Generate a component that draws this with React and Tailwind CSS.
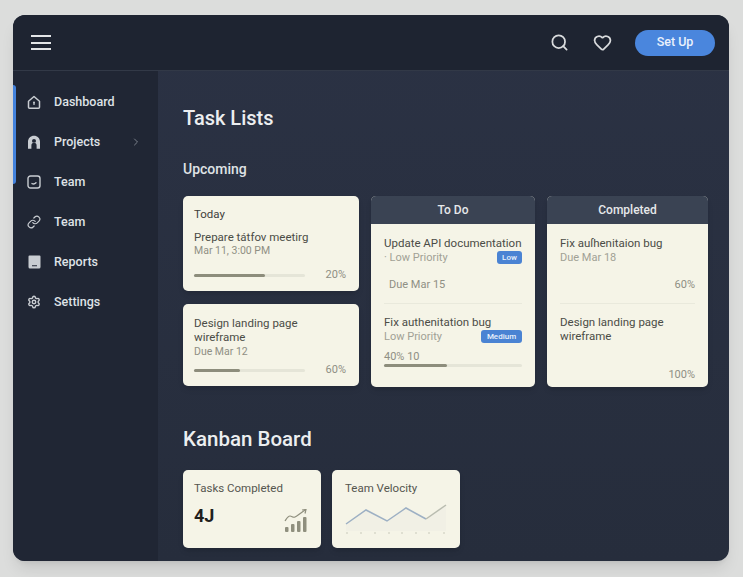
import { ChevronRight, Heart, Link, Search, Settings } from 'lucide-react';

function HomeIcon() {
    return (
        <svg width="14" height="15" viewBox="0 0 14 15" fill="none" stroke="currentColor" strokeWidth="1.5">
            <path d="M1.5 6.2 7 1.5l5.5 4.7v6.1a1 1 0 0 1-1 1h-9a1 1 0 0 1-1-1z" strokeLinejoin="round" />
            <circle cx="7" cy="7.6" r="1" fill="currentColor" stroke="none" />
            <rect x="6.4" y="7.6" width="1.2" height="2.4" fill="currentColor" stroke="none" />
        </svg>
    );
}

function ProjectsIcon() {
    return (
        <svg width="14" height="15" viewBox="0 0 14 15" fill="currentColor">
            <path fillRule="evenodd" d="M7 .8c3.4 0 6 2.6 6 6v7H9.6v-3.4a2.6 2.6 0 0 0-5.2 0v3.4H1v-7c0-3.4 2.6-6 6-6zm0 3.3a2 2 0 1 0 0 4 2 2 0 0 0 0-4z" />
        </svg>
    );
}

function FaceIcon() {
    return (
        <svg width="14" height="14" viewBox="0 0 14 14" fill="none" stroke="currentColor" strokeWidth="1.4">
            <rect x="1" y="1" width="12" height="12" rx="2.5" />
            <path d="M5 8.6c1.4.6 2.8.4 4-.8" strokeLinecap="round" />
        </svg>
    );
}

function ReportsIcon() {
    return (
        <svg width="13" height="14" viewBox="0 0 13 14" fill="currentColor">
            <path fillRule="evenodd" d="M1.5.5h10a1 1 0 0 1 1 1v10.5a1.5 1.5 0 0 1-1.5 1.5H2A1.5 1.5 0 0 1 .5 12V1.5a1 1 0 0 1 1-1zM4 10.2v1h5v-1z" />
        </svg>
    );
}

function TrendIcon() {
    return (
        <svg width="25" height="24" viewBox="0 0 25 24" fill="none" className="text-[#8f8f7e]">
            <path d="M1 12c2-3 3-5 5-5s3 2 5 1 6-4 10-7" stroke="currentColor" strokeWidth="1.2" />
            <path d="m18 1 4-.5-1 4" stroke="currentColor" strokeWidth="1.2" />
            <rect x="1" y="18" width="3.5" height="5" rx="1" fill="currentColor" />
            <rect x="7" y="15" width="3.5" height="8" rx="1" fill="currentColor" />
            <rect x="13" y="12" width="3.5" height="11" rx="1" fill="currentColor" />
            <rect x="19" y="8" width="3.5" height="15" rx="1" fill="currentColor" />
        </svg>
    );
}

function VelocityChart() {
    return (
        <svg width="102" height="34" viewBox="0 0 102 34" fill="none" className="mt-[5px]">
            <path d="M1 23 21 9l21 11L61 7l20 11 20-14v26H1z" fill="#f1f0e5" />
            <path d="M1 23 21 9l21 11L61 7l20 11" stroke="#9db0c4" strokeWidth="1.5" />
            <path d="m81 18 20-14" stroke="#b9bcb0" strokeWidth="1.5" />
            {[2, 16, 30, 44, 57, 71, 84, 99].map((x) => (
                <circle key={x} cx={x} cy="32" r="0.8" fill="#c4c4b6" />
            ))}
        </svg>
    );
}

function NavItem({ icon, label, chevron }) {
    return (
        <div className="flex h-10 items-center gap-[13px] pl-[14px] pr-4 text-[12.5px] font-medium text-[#dfe2e6]">
            <span className="flex w-[14px] justify-center text-[#c9cdd2]">{icon}</span>
            <span>{label}</span>
            {chevron && <ChevronRight className="ml-auto size-3 text-[#7b818b]" />}
        </div>
    );
}

function Progress({ width = 'w-[111px]', fill }) {
    return (
        <div className={`h-[3px] rounded-full bg-[#e5e5d8] ${width}`}>
            <div className={`h-full rounded-full bg-[#8d8d7c] ${fill}`} />
        </div>
    );
}

function Badge({ children, className }) {
    return (
        <span className={`flex h-[13px] items-center justify-center rounded-[3px] bg-[#4a83d3] text-[8px] font-medium text-[#e8f0fb] ${className}`}>
            {children}
        </span>
    );
}

function ColumnHeader({ children }) {
    return (
        <div className="flex h-7 items-center justify-center bg-[#3a4353] text-xs font-medium text-[#e6e8ea]">
            {children}
        </div>
    );
}

export default function App() {
    return (
        <div className="h-[577px] w-[743px] overflow-hidden bg-[#dcdddc] px-[13px] pt-[15px] font-['Roboto',sans-serif]">
            <div className="relative flex h-[546px] w-[716px] flex-col overflow-hidden rounded-xl bg-gradient-to-b from-[#2b3244] to-[#262d3c] shadow-lg">
                <header className="flex h-14 shrink-0 items-center justify-between border-b border-[#323947] bg-[#1e2431] pl-[18px] pr-[14px]">
                    <div className="flex w-5 flex-col gap-[4.5px]">
                        <span className="h-0.5 bg-[#e3e5e7]" />
                        <span className="h-0.5 bg-[#e3e5e7]" />
                        <span className="h-0.5 bg-[#e3e5e7]" />
                    </div>
                    <div className="flex items-center">
                        <Search className="size-[19px] text-[#d9dbdd]" strokeWidth={2.2} />
                        <Heart className="ml-6 size-[19px] text-[#d9dbdd]" strokeWidth={2.2} />
                        <button className="ml-[23px] h-[26px] w-20 rounded-full bg-[#4a86dd] text-[12.5px] font-medium text-[#eaf2fc]">
                            Set Up
                        </button>
                    </div>
                </header>

                <div className="flex min-h-0 flex-1">
                    <aside className="relative w-[145px] shrink-0 bg-[#202634] pt-[11px]">
                        <div className="absolute left-0 top-[14px] h-[99px] w-[3px] rounded-r bg-[#4382dc]" />
                        <NavItem icon={<HomeIcon />} label="Dashboard" />
                        <NavItem icon={<ProjectsIcon />} label="Projects" chevron />
                        <NavItem icon={<FaceIcon />} label="Team" />
                        <NavItem icon={<Link className="size-[14px]" strokeWidth={2} />} label="Team" />
                        <NavItem icon={<ReportsIcon />} label="Reports" />
                        <NavItem icon={<Settings className="size-[14px]" strokeWidth={2.4} />} label="Settings" />
                    </aside>

                    <main className="min-w-0 flex-1 pl-[25px] pt-[32px]">
                        <h1 className="text-[20px] font-medium leading-[30px] text-[#eceef0]">Task Lists</h1>
                        <h2 className="mt-[26px] text-sm font-medium leading-5 text-[#dfe2e5]">Upcoming</h2>

                        <div className="mt-[17px] flex gap-3 text-[#4b4c46]">
                            <div className="flex w-[176px] flex-col gap-[13px]">
                                <div className="h-[95px] rounded-[5px] bg-[#f5f4e7] px-[11px] pt-[10px] shadow-md">
                                    <div className="text-[11.5px] leading-4 text-[#3f403b]">Today</div>
                                    <div className="mt-[8px] text-[11.5px] leading-[14px]">Prepare tátfov meetirg</div>
                                    <div className="text-[10.5px] leading-[14px] text-[#8f8f84]">Mar 11, 3:00 PM</div>
                                    <div className="mt-[9px] flex items-center justify-between pr-[2px]">
                                        <Progress fill="w-[64%]" />
                                        <span className="text-[11px] text-[#8f8f84]">20%</span>
                                    </div>
                                </div>
                                <div className="h-[82px] rounded-[5px] bg-[#f5f4e7] px-[11px] pt-[12px] shadow-md">
                                    <div className="text-[11.5px] leading-[14px]">Design landing page<br />wireframe</div>
                                    <div className="text-[10.5px] leading-[15px] text-[#8f8f84]">Due Mar 12</div>
                                    <div className="mt-[3px] flex items-center justify-between pr-[2px]">
                                        <Progress fill="w-[41%]" />
                                        <span className="text-[11px] text-[#8f8f84]">60%</span>
                                    </div>
                                </div>
                            </div>

                            <div className="flex h-[191px] w-[164px] flex-col overflow-hidden rounded-[5px] bg-[#f5f4e7] shadow-md">
                                <ColumnHeader>To Do</ColumnHeader>
                                <div className="mx-[13px] h-[80px] border-b border-[#e9e9dc] pt-[12px]">
                                    <div className="text-[11.5px] leading-[14px]">Update API documentation</div>
                                    <div className="flex items-center justify-between text-[11px] leading-[15px] text-[#a1a195]">
                                        <span>· Low Priority</span>
                                        <Badge className="w-[25px]">Low</Badge>
                                    </div>
                                    <div className="mt-[13px] pl-[5px] text-[11px] leading-[14px] text-[#8f8f84]">Due Mar 15</div>
                                </div>
                                <div className="mx-[13px] pt-[11px]">
                                    <div className="text-[11.5px] leading-[14px]">Fix authenitation bug</div>
                                    <div className="flex items-center justify-between text-[11px] leading-[15px] text-[#a1a195]">
                                        <span>Low Priority</span>
                                        <Badge className="w-[41px]">Medium</Badge>
                                    </div>
                                    <div className="mt-[6px] text-[11px] leading-[14px] text-[#8f8f84]">40% 10</div>
                                    <Progress width="w-full" fill="w-[46%]" />
                                </div>
                            </div>

                            <div className="flex h-[191px] w-[161px] flex-col overflow-hidden rounded-[5px] bg-[#f5f4e7] shadow-md">
                                <ColumnHeader>Completed</ColumnHeader>
                                <div className="mx-[13px] h-[80px] border-b border-[#e9e9dc] pt-[12px]">
                                    <div className="text-[11.5px] leading-[14px]">Fix auſhenitaion bug</div>
                                    <div className="text-[11px] leading-[15px] text-[#a1a195]">Due Mar 18</div>
                                    <div className="mt-[13px] text-right text-[11px] leading-[14px] text-[#8f8f84]">60%</div>
                                </div>
                                <div className="mx-[13px] pt-[11px]">
                                    <div className="text-[11.5px] leading-[14px]">Design landing page<br />wireframe</div>
                                    <div className="mt-[25px] text-right text-[11px] leading-[14px] text-[#8f8f84]">100%</div>
                                </div>
                            </div>
                        </div>

                        <h2 className="mt-[37px] text-[20.5px] font-medium leading-[30px] text-[#eceef0]">Kanban Board</h2>

                        <div className="mt-[16px] flex gap-[11px]">
                            <div className="h-[78px] w-[138px] rounded-[5px] bg-[#f5f4e7] px-[11px] pt-[10px] shadow-md">
                                <div className="text-[11.5px] leading-4 text-[#55564f]">Tasks Completed</div>
                                <div className="flex items-start justify-between">
                                    <span className="mt-[8px] text-lg font-bold leading-6 text-[#1f201d]">4J</span>
                                    <span className="mr-[1px] mt-[13px]"><TrendIcon /></span>
                                </div>
                            </div>
                            <div className="h-[78px] w-[128px] rounded-[5px] bg-[#f5f4e7] px-[13px] pt-[10px] shadow-md">
                                <div className="text-[11.5px] leading-4 text-[#55564f]">Team Velocity</div>
                                <VelocityChart />
                            </div>
                        </div>
                    </main>
                </div>
            </div>
        </div>
    );
}
